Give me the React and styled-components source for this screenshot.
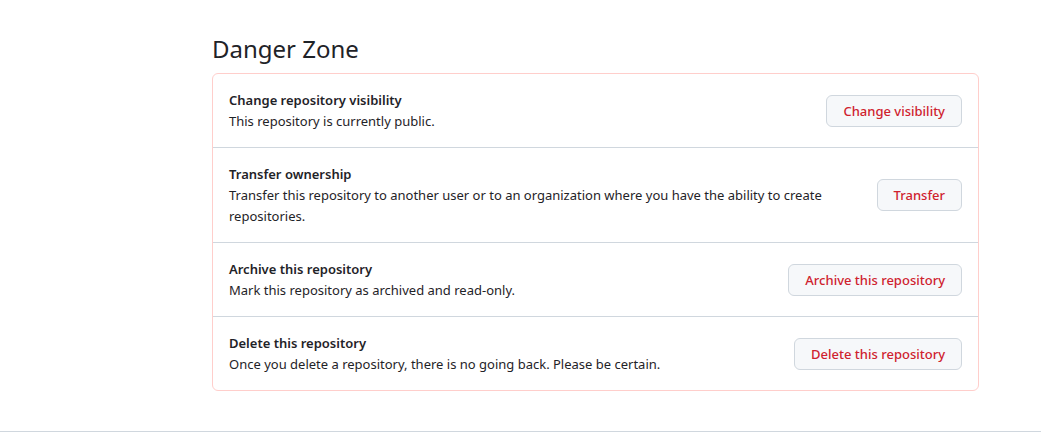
import React from "react";
import styled, {createGlobalStyle} from "styled-components";

const GlobalStyle = createGlobalStyle`
  body {
    margin: 0;
    background: #ffffff;
    font-family: "Noto Sans", "Open Sans", sans-serif;
    color: #1f2328;
  }
`;

const Page = styled.div`
  border-bottom: 1px solid #d0d7de;
  padding: 31px 0 40px 212px;
`;

const Section = styled.section`
  width: 767px;
`;

const Heading = styled.h2`
  margin: 0 0 6px;
  font-size: 24px;
  font-weight: 400;
  line-height: 36px;
  color: #1f2328;
`;

const Box = styled.div`
  border: 1px solid #ffcecb;
  border-radius: 6px;
`;

const Row = styled.div`
  display: flex;
  align-items: center;
  gap: 16px;
  padding: 16px 16px 15.5px;
  border-top: ${props => (props.first ? "none" : "1px solid #d0d7de")};
`;

const Details = styled.div`
  flex: 1;
  font-size: 13px;
  line-height: 20.8px;
  max-width: ${props => props.maxWidth || "none"};
`;

const Title = styled.div`
  font-weight: 600;
`;

const Button = styled.button`
  height: 32px;
  padding: 0 16px;
  border: 1px solid #d0d7de;
  border-radius: 6px;
  background: #f6f8fa;
  color: #cf222e;
  font-family: inherit;
  font-size: 13px;
  font-weight: 500;
  white-space: nowrap;
  cursor: pointer;
  margin-left: auto;
`;

const rows = [
  {
    title: "Change repository visibility",
    text: "This repository is currently public.",
    action: "Change visibility",
  },
  {
    title: "Transfer ownership",
    text: "Transfer this repository to another user or to an organization where you have the ability to create repositories.",
    action: "Transfer",
    maxWidth: "620px",
  },
  {
    title: "Archive this repository",
    text: "Mark this repository as archived and read-only.",
    action: "Archive this repository",
  },
  {
    title: "Delete this repository",
    text: "Once you delete a repository, there is no going back. Please be certain.",
    action: "Delete this repository",
  },
];

export default function App() {
  return (
    <Page>
      <GlobalStyle/>
      <Section>
        <Heading>Danger Zone</Heading>
        <Box>
          {rows.map((row, index) => (
            <Row key={row.title} first={index === 0}>
              <Details maxWidth={row.maxWidth}>
                <Title>{row.title}</Title>
                <div>{row.text}</div>
              </Details>
              <Button>{row.action}</Button>
            </Row>
          ))}
        </Box>
      </Section>
    </Page>
  );
}
